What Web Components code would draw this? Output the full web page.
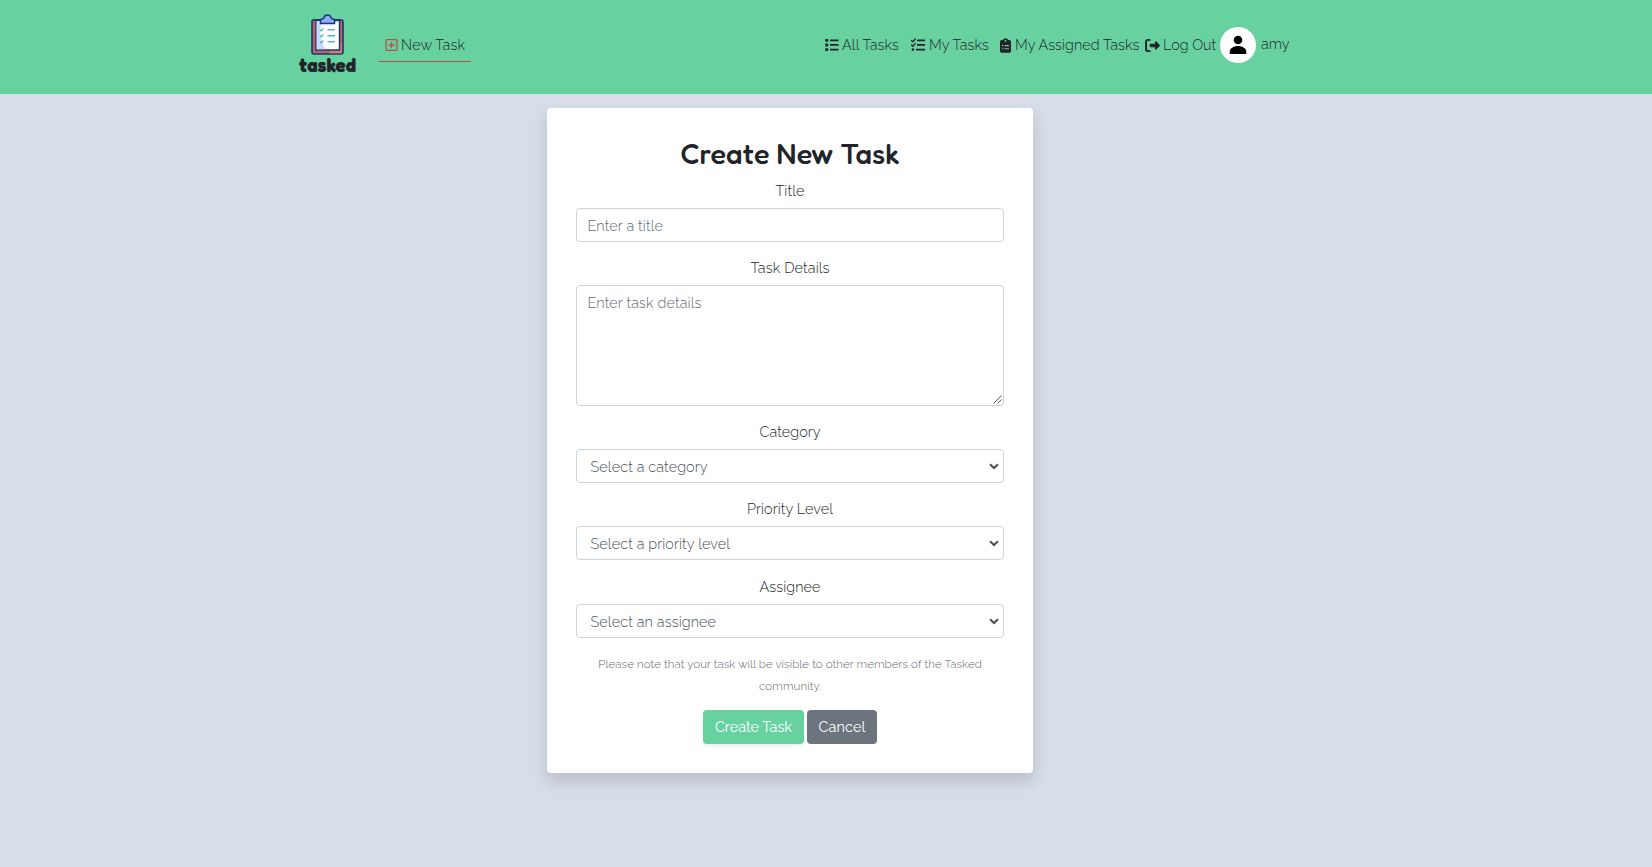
<!DOCTYPE html>
<html lang="en">
<head>
<meta charset="utf-8">
<title>Tasked</title>
<style>
body { margin: 0; min-height: 867px; background: #d7dde9; font: 300 14.4px/22px Raleway, Lato, "Open Sans", sans-serif; color: #212529; }
</style>
</head>
<body>
<task-nav></task-nav>
<task-card>
  <task-field label="Title" lw="29" text="Enter a title" tw="75.5"></task-field>
  <task-field label="Task Details" lw="79" text="Enter task details" tw="114" kind="area"></task-field>
  <task-field label="Category" lw="61" text="Select a category" tw="117" kind="select"></task-field>
  <task-field label="Priority Level" lw="86" text="Select a priority level" tw="139.5" kind="select"></task-field>
  <task-field label="Assignee" lw="61" text="Select an assignee" tw="125.5" kind="select" style="margin-top:15px"></task-field>
</task-card>
<script>
/* A run of text tracked to fill a given width. */
customElements.define('fit-text', class extends HTMLElement {
  connectedCallback() {
    const root = this.attachShadow({ mode: 'open' });
    root.innerHTML = `<style>:host{display:inline-block;white-space:nowrap;text-align:left;flex:none}span{display:inline-block}</style><span></span>`;
    const span = root.querySelector('span');
    span.textContent = this.getAttribute('text');
    const w = +this.getAttribute('w');
    this.style.width = w + 'px';
    const n = span.textContent.length;
    span.style.letterSpacing = (w - span.getBoundingClientRect().width) / (n - 1) + 'px';
  }
});

const icons = {
  plus: ['0 0 448 512', 13, 14, '<path d="M64 56h320a40 40 0 0 1 40 40v320a40 40 0 0 1-40 40H64a40 40 0 0 1-40-40V96a40 40 0 0 1 40-40zM224 160v192M128 256h192" fill="none" stroke="currentColor" stroke-width="46" stroke-linecap="round"/>'],
  list: ['0 0 14 14', 14, 14, '<path d="M.3 1h2.9v2.8H.3zM.3 5.6h2.9v2.8H.3zM.3 10.2h2.9V13H.3zM5 1.5h8.5v1.7H5zM5 6.1h8.5v1.7H5zM5 10.7h8.5v1.7H5z"/>'],
  check: ['0 0 14 14', 14, 14, '<path d="M.5 2.5l1.3 1.3L4.2 1M.5 7l1.3 1.3 2.4-2.8" fill="none" stroke="currentColor" stroke-width="1.3" stroke-linecap="round"/><circle cx="1.9" cy="11.6" r="1.3"/><path d="M6 1.5h8v1.7H6zM6 6.1h8v1.7H6zM5 10.7h9v1.7H5z"/>'],
  clip: ['0 0 384 512', 11, 15, '<path fill-rule="evenodd" d="M192 0c-42 0-77 27-90 64H64C29 64 0 93 0 128v320c0 35 29 64 64 64h256c35 0 64-29 64-64V128c0-35-29-64-64-64h-38C269 27 234 0 192 0zm0 64a32 32 0 1 1 0 64 32 32 0 1 1 0-64zM72 240h48v40H72zm88 0h152v40H160zM72 350h48v40H72zm88 0h152v40H160z"/>'],
  out: ['0 0 512 512', 15, 15, '<path d="M502 273L378 398c-13 13-34 4-34-14v-72H192c-18 0-32-14-32-32v-48c0-18 14-32 32-32h152v-72c0-18 21-27 34-14l124 125c10 9 10 25 0 34z"/><path d="M160 64H96a60 60 0 0 0-60 60v264a60 60 0 0 0 60 60h64" fill="none" stroke="currentColor" stroke-width="66" stroke-linecap="round"/>']
};
customElements.define('task-icon', class extends HTMLElement {
  connectedCallback() {
    const [vb, w, h, body] = icons[this.getAttribute('name')];
    this.attachShadow({ mode: 'open' }).innerHTML =
      `<style>:host{display:block;flex:none}svg{display:block;fill:currentColor}</style><svg width="${w}" height="${h}" viewBox="${vb}">${body}</svg>`;
  }
});

customElements.define('task-nav', class extends HTMLElement {
  connectedCallback() {
    this.attachShadow({ mode: 'open' }).innerHTML = `
<style>
:host{display:flex;box-sizing:border-box;height:94px;background:#67d2a0;padding-left:298px;align-items:flex-start}
.logo{width:58px;padding-top:14px;flex:none}
.logo svg{display:block;margin-left:13px}
.logo fit-text{font:700 18.500px/20px Fredoka,Quicksand,Lato,sans-serif;margin:0 0 0 1px;-webkit-text-stroke:.2px #212529;display:block}
.new{box-sizing:border-box;width:92px;height:40px;margin:22px 0 0 23px;padding:12px 0 0 6px;border-bottom:1px solid #b3504c;display:flex;flex:none}
.new task-icon{color:#b3504c;margin:4px 3px 0 0}
.links{display:flex;height:36px;margin:27px 0 0 354px;align-items:center}
.links task-icon{margin-right:4px}
.avatar{display:block;margin:0 5px 0 4px}
</style>
<div class="logo">
<svg width="33" height="41" viewBox="0 0 33 41">
<rect x="1" y="5.7" width="31" height="34.3" rx="2" fill="#bd6258" stroke="#143a7c" stroke-width="1.6"/>
<path d="M18 39.2h12.500L31 28c-5 1-10 5-13 11.200z" fill="#da7b68"/>
<path d="M5 6.500h23.500v29.500H5z" fill="#fff" stroke="#143a7c" stroke-width="1.400"/>
<path d="M5.700 7h6c-4 8-4 18 3 28.300h-9z" fill="#cbd8fa"/>
<path d="M9.500 9.500V6.500q0-1.500 1.500-1.500 1.500 0 2-1.500C13.500 1.500 15 .9 16.500.9s3 .6 3.500 2.600q.5 1.500 2 1.500 1.500 0 1.500 1.500v3z" fill="#8eaaf2" stroke="#143a7c" stroke-width="1.500"/>
<path d="M9 15.700l1.300 1.200 2-2.500M9 21.700l1.300 1.200 2-2.500M9 27.700l1.300 1.200 2-2.500M16.500 15.800h7.500M16.500 21.800h7.500M16.500 27.800h7.500" stroke="#51b9c6" stroke-width="1.400" fill="none"/>
</svg>
<fit-text text="tasked" w="57"></fit-text>
</div>
<div class="new"><task-icon name="plus"></task-icon><fit-text text="New Task" w="64"></fit-text></div>
<div class="links">
<task-icon name="list"></task-icon><fit-text text="All Tasks" w="57" style="margin:0 12px 0 -1px"></fit-text>
<task-icon name="check"></task-icon><fit-text text="My Tasks" w="60" style="margin-right:11px"></fit-text>
<task-icon name="clip"></task-icon><fit-text text="My Assigned Tasks" w="124.500" style="margin-right:5px"></fit-text>
<task-icon name="out" style="margin-right:3.500px"></task-icon><fit-text text="Log Out" w="53"></fit-text>
<svg class="avatar" width="36" height="36" viewBox="0 0 36 36"><circle cx="18" cy="18" r="18" fill="#fff"/><circle cx="18" cy="13" r="4.300"/><path d="M9.700 27v-2c0-3.500 3.500-6 8.300-6s8.300 2.500 8.300 6v2z"/></svg>
<fit-text text="amy" w="28.500" style="margin-top:-2px"></fit-text>
</div>`;
  }
});

customElements.define('task-card', class extends HTMLElement {
  connectedCallback() {
    this.attachShadow({ mode: 'open' }).innerHTML = `
<style>
:host{display:block;box-sizing:border-box;width:486px;height:665px;margin:14px 0 0 547px;padding:29px;background:#fff;border-radius:4px;box-shadow:0 8px 16px rgba(0,0,0,.15);text-align:center}
h2{margin:0 0 9px;height:33px;font:500 28.800px/33px Fredoka,Quicksand,Lato,sans-serif}
.note{font-size:11.500px;margin-top:15px;color:#5f6870}
.note fit-text{display:block;margin:0 auto}
.buttons{display:flex;justify-content:center;gap:3px;margin-top:13px}
button{font:inherit;font-weight:450;color:#fff;border:0;border-radius:4px;height:34px;padding:0;background:#6c757d;width:70px}
.go{background:#67d2a0;width:101px;box-shadow:0 2px 4px rgba(0,0,0,.075)}
</style>
<h2><fit-text text="Create New Task" w="219"></fit-text></h2>
<slot></slot>
<div class="note"><fit-text text="Please note that your task will be visible to other members of the Tasked" w="383.500"></fit-text><fit-text text="community." w="62"></fit-text></div>
<div class="buttons"><button class="go"><fit-text text="Create Task" w="77"></fit-text></button><button><fit-text text="Cancel" w="47"></fit-text></button></div>`;
  }
});

customElements.define('task-field', class extends HTMLElement {
  connectedCallback() {
    const a = n => this.getAttribute(n), kind = a('kind');
    const extra = kind === 'select'
      ? '<svg width="10" height="7" viewBox="0 0 10 7"><path d="M1 1.300l4 3.700 4-3.700" fill="none" stroke="#495057" stroke-width="2.100"/></svg>'
      : kind === 'area'
      ? '<svg width="9" height="9" viewBox="0 0 9 9"><path d="M.5 8.500l8-8M4.500 8.500l4-4" stroke="#555" stroke-width="1"/></svg>' : '';
    this.attachShadow({ mode: 'open' }).innerHTML = `
<style>
:host{display:block;margin-bottom:14px}
label{display:block;box-sizing:border-box;height:22px;margin-bottom:7px;padding-top:.5px}
.box{display:flex;justify-content:space-between;align-items:center;box-sizing:border-box;height:34px;padding:1px 4px 0 10.500px;border:1px solid #ced4da;border-radius:4px;color:#5f6870;background:#fff}
.area{height:121px;align-items:flex-start;padding:6px 1px 1px 10.500px}
.area svg{align-self:flex-end}
.select{color:#495057;padding-left:13.500px}
</style>
<label><fit-text text="${a('label')}" w="${a('lw')}"></fit-text></label>
<div class="box ${kind || ''}"><fit-text text="${a('text')}" w="${a('tw')}"></fit-text>${extra}</div>`;
  }
});
</script>
</body>
</html>
